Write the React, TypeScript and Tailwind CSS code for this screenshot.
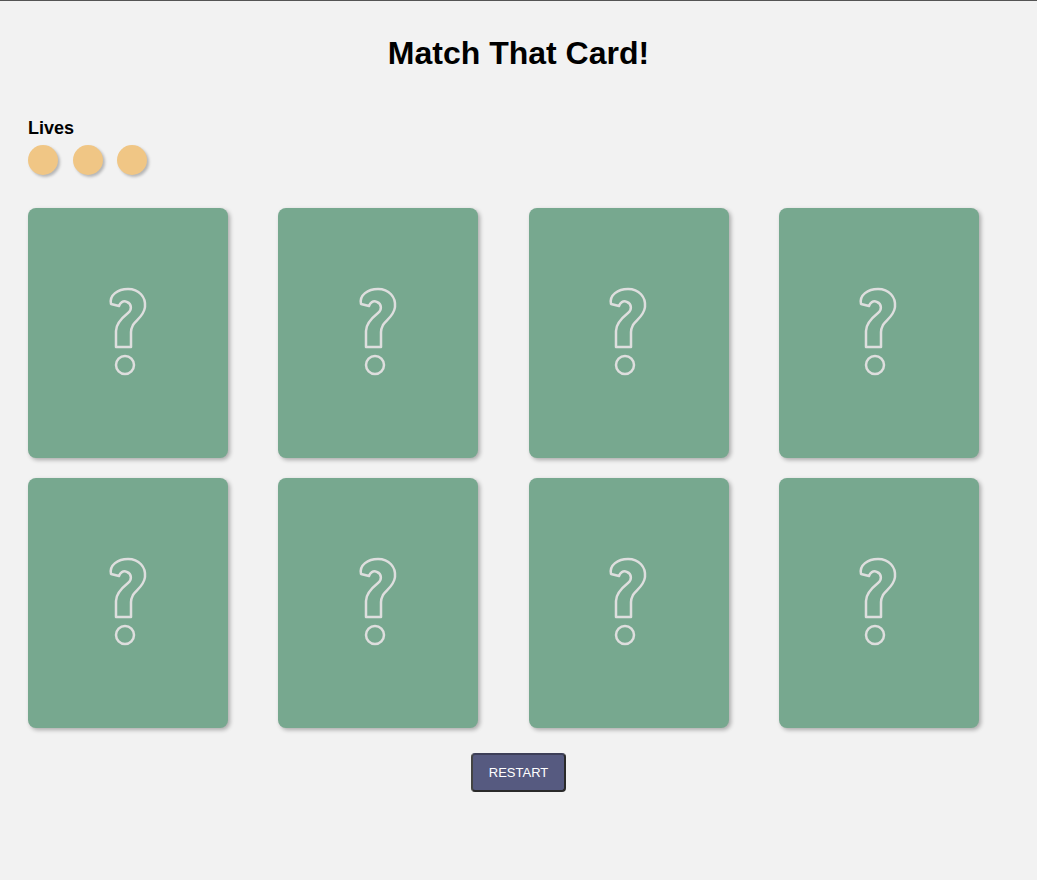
const QuestionMark = () => (
  <svg width="45" height="96" viewBox="0 0 45 96" fill="none" stroke="#dedede" strokeWidth="2.5" strokeLinejoin="round" aria-hidden="true">
    <path d="M5 19 C3 10 12 4 22 4 C33 4 40 12 39 22 C38 31 30 35 27 40 C26 42 25 44 25 47 L25 62 L10 62 L10 46 C10 38 17 32 22 28 C26 25 26 19 21 17 C17 15 14 18 13 21 Z" />
    <circle cx="19" cy="80" r="9" />
  </svg>
);

const Card = () => (
  <div className="w-[200px] h-[250px] rounded-lg bg-[#77a88f] shadow-[2px_2px_4px_rgba(0,0,0,0.3)] flex items-center justify-center">
    <QuestionMark />
  </div>
);

export default function App() {
  const cards = Array.from({ length: 8 }, (_, i) => i);
  const lives = [0, 1, 2];

  return (
    <div className="min-h-screen bg-[#f2f2f2] border-t border-[#555] font-['Liberation_Sans',Arial,sans-serif] text-black">
      <h1 className="pt-[34px] text-[32px] leading-[37px] font-bold text-center">Match That Card!</h1>

      <div className="px-[28px] mt-[46px]">
        <h2 className="text-[18px] leading-[21px] font-bold">Lives</h2>
        <div className="mt-[6px] flex gap-[14.5px]">
          {lives.map((l) => (
            <div key={l} className="w-[30px] h-[30px] rounded-full bg-[#f0c685] shadow-[2px_2px_3px_rgba(0,0,0,0.25)]" />
          ))}
        </div>

        <div className="mt-[33px] grid grid-cols-[repeat(4,200px)] gap-x-[50.33px] gap-y-5">
          {cards.map((c) => (
            <Card key={c} />
          ))}
        </div>
      </div>

      <div className="mt-[25px] flex justify-center">
        <button className="w-[95px] h-[39px] rounded-[4px] bg-[#565a80] text-white text-[13px] border-2 border-t-[#3d3f58] border-l-[#444] border-r-[#2a2a2a] border-b-[#2a2a2a]">
          RESTART
        </button>
      </div>
    </div>
  );
}
